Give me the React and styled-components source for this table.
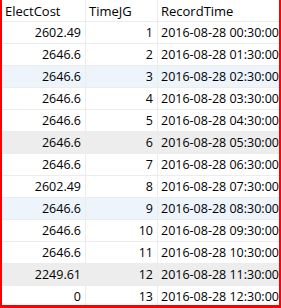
import React from "react";
import styled, { createGlobalStyle } from "styled-components";

const Global = createGlobalStyle`
  html, body { margin: 0; padding: 0; background: #fff; }
  body { font-family: "Open Sans", "Noto Sans", "Liberation Sans", sans-serif; }
`;

const Frame = styled.div`
  box-sizing: border-box;
  width: 281px;
  height: 308px;
  border-left: 2px solid #f00;
  border-right: 2px solid #f00;
  border-bottom: 3px solid #f00;
  overflow: hidden;
  background: #fff;
`;

const Grid = styled.div`
  display: grid;
  grid-template-columns: 84px 72px 140px;
  grid-auto-rows: 22px;
  width: 296px;
`;

const Cell = styled.div`
  box-sizing: border-box;
  display: flex;
  align-items: center;
  justify-content: ${(p) => (p.$right ? "flex-end" : "flex-start")};
  padding: ${(p) => (p.$right ? "0 4px 0 0" : "0 0 0 3px")};
  border-right: 1px solid #ececec;
  border-bottom: 1px solid #ececec;
  background: ${(p) => p.$bg || "#fff"};
  font-size: 12.5px;
  color: #000;
  white-space: nowrap;
  overflow: hidden;
`;

const HeadCell = styled(Cell)`
  font-size: 13px;
`;

const rows = [
  ["2602.49", 1, "00"],
  ["2646.6", 2, "01"],
  ["2646.6", 3, "02"],
  ["2646.6", 4, "03"],
  ["2646.6", 5, "04"],
  ["2646.6", 6, "05"],
  ["2646.6", 7, "06"],
  ["2602.49", 8, "07"],
  ["2646.6", 9, "08"],
  ["2646.6", 10, "09"],
  ["2646.6", 11, "10"],
  ["2249.61", 12, "11"],
  ["0", 13, "12"],
];

const bgFor = (n) => {
  if (n === 3 || n === 9) return "#edf4fc";
  if (n === 6 || n === 12) return "#ededed";
  return "#fff";
};

export default function App() {
  return (
    <>
      <Global />
      <Frame>
        <Grid>
          <HeadCell>ElectCost</HeadCell>
          <HeadCell>TimeJG</HeadCell>
          <HeadCell>RecordTime</HeadCell>
          {rows.map(([cost, n, h]) => (
            <React.Fragment key={n}>
              <Cell $right $bg={bgFor(n)}>{cost}</Cell>
              <Cell $right $bg={bgFor(n)}>{n}</Cell>
              <Cell $bg={bgFor(n)}>{`2016-08-28 ${h}:30:00`}</Cell>
            </React.Fragment>
          ))}
        </Grid>
      </Frame>
    </>
  );
}
